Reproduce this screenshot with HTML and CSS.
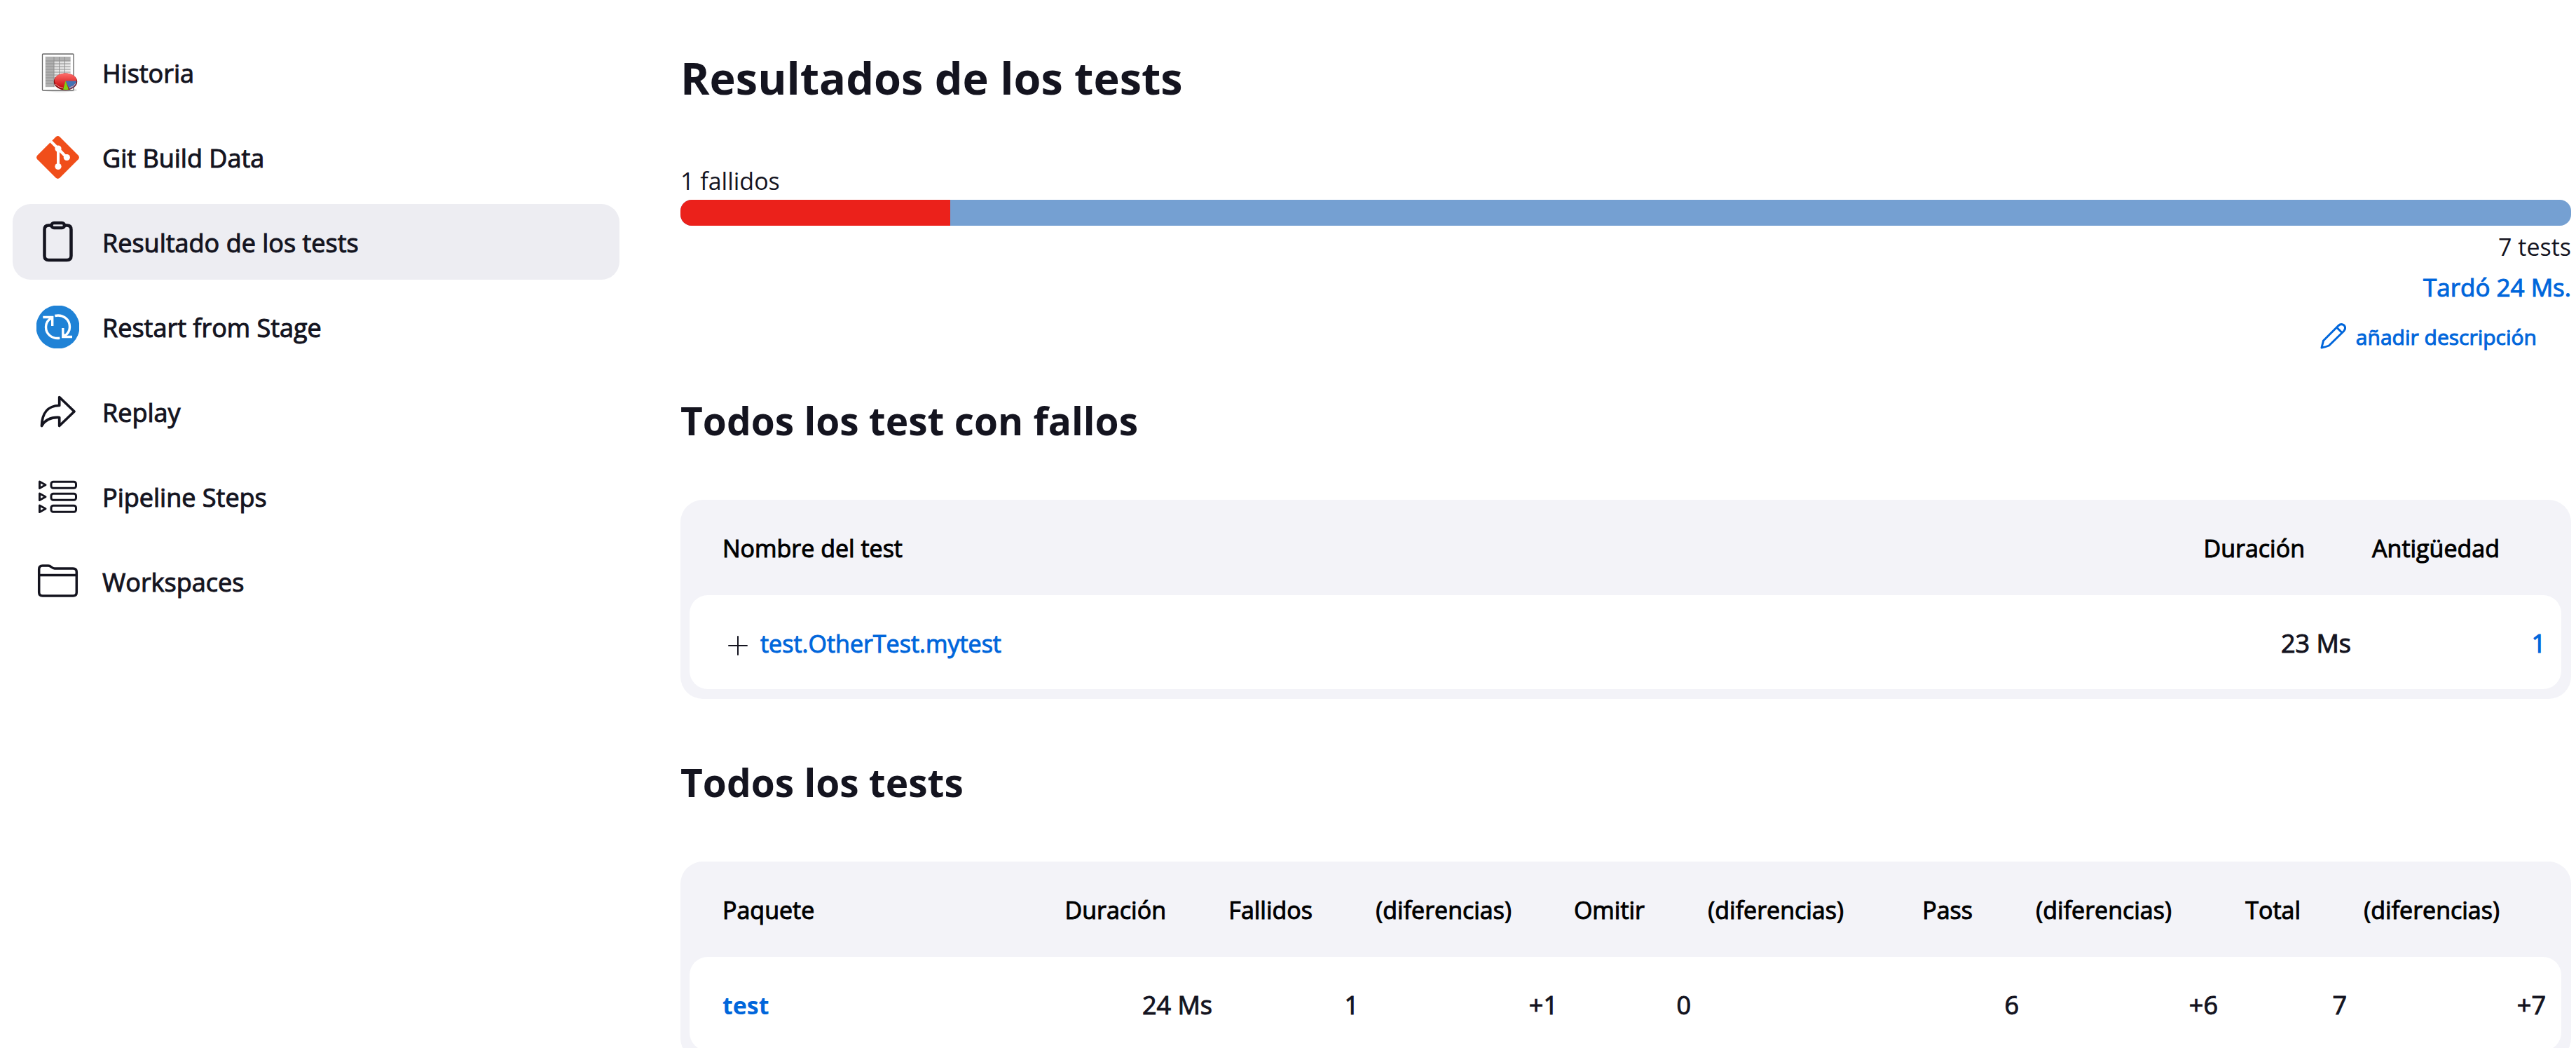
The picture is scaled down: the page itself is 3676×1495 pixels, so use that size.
FILE: index.html
```html
<!DOCTYPE html>
<html lang="es">
<head>
<meta charset="utf-8">
<meta name="viewport" content="width=device-width, initial-scale=1">
<title>Resultados de los tests</title>
<link rel="stylesheet" href="styles.css">
</head>
<body>
<div class="page">
  <nav class="sidebar" aria-label="Tareas">
    <a class="task" href="#historia">
      <svg class="task-icon" viewBox="0 0 61 61" aria-hidden="true">
        <defs>
          <linearGradient id="pie-red" x1="0" y1="0" x2="0" y2="1"><stop offset="0" stop-color="#ff6f6c"/><stop offset="1" stop-color="#c8090c"/></linearGradient>
          <linearGradient id="sheet" x1="0" y1="0" x2="1" y2="1"><stop offset="0" stop-color="#d4d4d4"/><stop offset="1" stop-color="#f6f6f6"/></linearGradient>
        </defs>
        <ellipse cx="34" cy="55.500" rx="24" ry="3" fill="#e2e2e2"/>
        <rect x="8.500" y="4" width="44.500" height="52" rx="1" fill="#fff" stroke="#666" stroke-width="1.300"/>
        <path d="M12.500 7.500H49V51.500H12.500Z" fill="url(#sheet)"/>
        <path d="M13 8H48.500V14H25V51H13Z" fill="#b0b0b0"/>
        <path d="M13 14H48.500M13 18H48.500M13 22H48.500M13 26H48.500M13 30H48.500M13 34H48.500M13 38H48.500M13 42H48.500M13 46H48.500M25 8V51M32.500 8V51M40.500 8V51" stroke="#8f8f8f" stroke-width="1" fill="none"/>
        <ellipse cx="41.500" cy="43.500" rx="16.700" ry="12" fill="#8c0b0d"/>
        <ellipse cx="41.500" cy="42" rx="15.700" ry="10.500" fill="url(#pie-red)"/>
        <path d="M41.500 42.500H57.200C57.200 48 53 52.500 47 54Z" fill="#4472b4"/>
        <path d="M41.500 42.500L46 54.500Q42 55.500 38 54.500Z" fill="#7fd012"/>
        <path d="M27 47Q32 52 38 52.500M47 52Q53 51 56 46" stroke="#f0a0a0" stroke-width="1" fill="none"/>
      </svg>
      <span class="task-label">Historia</span>
    </a>
    <a class="task" href="#git">
      <svg class="task-icon" viewBox="0 0 61 61" aria-hidden="true">
        <path d="M27.700 1.200Q30.500-1 33.300 1.200L59.800 27.700Q62 30.500 59.800 33.300L33.300 59.800Q30.500 62 27.700 59.800L1.200 33.300Q-1 30.500 1.200 27.700Z" fill="#f04e1a"/>
        <path d="M20.500 7.500L31 18L43 30.500M31 18V43" stroke="#fff" stroke-width="4" fill="none"/>
        <circle cx="31" cy="18" r="4.600" fill="#fff"/><circle cx="43.300" cy="30.500" r="4.600" fill="#fff"/><circle cx="31" cy="43.500" r="4.600" fill="#fff"/>
      </svg>
      <span class="task-label">Git Build Data</span>
    </a>
    <a class="task task-active" href="#tests" aria-current="page">
      <svg class="task-icon line-icon" viewBox="0 0 61 61" stroke-width="4.500" aria-hidden="true">
        <path d="M21 6.500H17.500Q11.500 6.500 11.500 12.500V50Q11.500 56 17.500 56H43.500Q49.500 56 49.500 50V12.500Q49.500 6.500 43.500 6.500H40"/>
        <rect x="21.500" y="3" width="18.500" height="7" rx="3.500"/>
      </svg>
      <span class="task-label">Resultado de los tests</span>
    </a>
    <a class="task" href="#restart">
      <svg class="task-icon" viewBox="0 0 61 61" aria-hidden="true">
        <circle cx="30.500" cy="30.500" r="31" fill="#1f82d6"/>
        <g fill="none" stroke="#fff" stroke-width="3.400">
          <path d="M26.300 14.500C38 12 47.500 19.500 47.500 30.500C47.500 36 45 40.500 39 44"/>
          <path d="M33.300 46.300C22 48 13.500 40.500 13.500 30.500C13.500 25 16 20.500 22 17"/>
          <path d="M9.300 16.500H22.700V29M37.800 32V44.500H51"/>
        </g>
        <path d="M16.500 16.500H22.700V22.500ZM44.500 44.500H37.800V38.500Z" fill="#fff"/>
      </svg>
      <span class="task-label">Restart from Stage</span>
    </a>
    <a class="task" href="#replay">
      <svg class="task-icon line-icon" viewBox="0 0 61 61" stroke-width="3.700" aria-hidden="true">
        <path d="M32.700 9.500L54 30L32.700 50.500V38.500C22 38 13 41 7.500 50.500C8 33 16 21.500 32.700 21.500Z"/>
      </svg>
      <span class="task-label">Replay</span>
    </a>
    <a class="task" href="#steps">
      <svg class="task-icon line-icon" viewBox="0 0 61 61" stroke-width="3" aria-hidden="true">
        <path d="M4.500 9L13 13.800L4.500 18.500ZM4.500 26L13 30.800L4.500 35.500ZM4.500 43L13 47.800L4.500 52.500Z"/>
        <rect x="21" y="9.300" width="35.500" height="9" rx="3"/><rect x="21" y="26.300" width="35.500" height="9" rx="3"/><rect x="21" y="43.300" width="35.500" height="9" rx="3"/>
      </svg>
      <span class="task-label">Pipeline Steps</span>
    </a>
    <a class="task" href="#workspaces">
      <svg class="task-icon line-icon" viewBox="0 0 61 61" stroke-width="3.500" aria-hidden="true">
        <path d="M3.700 46V13Q3.700 8 8.700 8H17C21 8 22 12 26 12H52.300Q57.300 12 57.300 17V46Q57.300 51 52.300 51H8.700Q3.700 51 3.700 46ZM3.700 21.500H57.300"/>
      </svg>
      <span class="task-label">Workspaces</span>
    </a>
  </nav>

  <main class="content">
    <h1 class="title">Resultados de los tests</h1>

    <section class="summary">
      <p class="summary-text">1 fallidos</p>
      <div class="bar" role="img" aria-label="1 de 7 tests con fallos"><div class="bar-failed" style="width:14.286%"></div></div>
      <p class="summary-text summary-end">7 tests</p>
      <p class="summary-text summary-end"><a class="link duration-link" href="#history">Tardó 24 Ms.</a></p>
      <a class="describe link" href="#describe">
        <svg class="describe-icon" viewBox="0 0 37 37" aria-hidden="true">
          <path d="M2 35L4.500 25L26 3.500Q30 0 34 3Q37.500 7 33.500 11.500L12.500 32Q8 34 2 35ZM23.500 6L31 13.500"/>
        </svg>
        <span class="describe-label">añadir descripción</span>
      </a>
    </section>

    <h2 class="heading">Todos los test con fallos</h2>
    <table class="data">
      <colgroup><col><col class="col-duration"><col class="col-age"></colgroup>
      <thead><tr><th scope="col">Nombre del test</th><th scope="col">Duración</th><th scope="col">Antigüedad</th></tr></thead>
      <tbody>
        <tr>
          <td>
            <div class="test-name">
              <button class="expand" type="button" aria-label="Mostrar detalles"><svg class="expand-icon" viewBox="0 0 28 28" aria-hidden="true"><path d="M14 1V27M1 14H27"/></svg></button>
              <a class="link" href="#mytest">test.OtherTest.mytest</a>
            </div>
          </td>
          <td>23 Ms</td>
          <td><a class="link" href="#age">1</a></td>
        </tr>
      </tbody>
    </table>

    <h2 class="heading">Todos los tests</h2>
    <table class="data">
      <colgroup><col><col class="col-duration"><col class="col-failed"><col class="col-diff"><col class="col-skipped"><col class="col-diff"><col class="col-count"><col class="col-diff"><col class="col-count"><col class="col-diff"></colgroup>
      <thead><tr><th scope="col">Paquete</th><th scope="col">Duración</th><th scope="col">Fallidos</th><th scope="col">(diferencias)</th><th scope="col">Omitir</th><th scope="col">(diferencias)</th><th scope="col">Pass</th><th scope="col">(diferencias)</th><th scope="col">Total</th><th scope="col">(diferencias)</th></tr></thead>
      <tbody>
        <tr><td><a class="link link-strong" href="#package">test</a></td><td>24 Ms</td><td>1</td><td>+1</td><td>0</td><td></td><td>6</td><td>+6</td><td>7</td><td>+7</td></tr>
      </tbody>
    </table>
  </main>
</div>
</body>
</html>
```
FILE: styles.css
```css
:root {
  --text: #14141f;
  --link: #0066db;
  --panel: #f3f3f8;
}

* {
  box-sizing: border-box;
}

body {
  margin: 0;
  background: #fff;
  color: var(--text);
  font-family: "Open Sans", "Noto Sans", sans-serif;
  font-size: 36px;
  line-height: 56px;
}

.page {
  display: grid;
  grid-template-columns: 866px minmax(0, 1fr);
  column-gap: 87px;
  padding: 49px 7px 0 18px;
}

.sidebar {
  display: flex;
  flex-direction: column;
  gap: 13px;
}

.content {
  display: flex;
  flex-direction: column;
}

/* The installed face has no medium cut, so a thin outline gives the weight. */
.task-label,
.link,
.data th,
.data td {
  -webkit-text-stroke: 1px currentColor;
}

.task {
  display: flex;
  align-items: center;
  gap: 33px;
  height: 108px;
  padding: 0 34px;
  border-radius: 26px;
  color: var(--text);
  text-decoration: none;
}

.task-active {
  background: #ededf2;
}

.task-label {
  padding-top: 4px;
}

.task-icon {
  flex: none;
  width: 61px;
  height: 61px;
}

.line-icon {
  fill: none;
  stroke: var(--text);
  stroke-linejoin: round;
  stroke-linecap: round;
}

.link {
  color: var(--link);
  text-decoration: none;
}

.data .link-strong {
  font-weight: 700;
  -webkit-text-stroke: 0;
}

.title {
  margin: 14px 0 69px;
  font-size: 63px;
  line-height: 96px;
  font-weight: 700;
}

.summary {
  display: flex;
  flex-direction: column;
}

.summary-text {
  margin: 0;
  padding-top: 4px;
  font-size: 34px;
  line-height: 53px;
}

.summary-end {
  text-align: right;
}

.duration-link {
  font-size: 35px;
}

.bar {
  height: 37px;
  border-radius: 16px;
  background: #75a0d2;
  overflow: hidden;
}

.bar-failed {
  height: 100%;
  background: #eb211b;
}

.describe {
  display: flex;
  align-items: center;
  align-self: flex-end;
  gap: 14px;
  height: 84px;
  padding-right: 49px;
  font-size: 30px;
}

.describe-label {
  padding-top: 4px;
}

.describe-icon {
  width: 37px;
  height: 37px;
  fill: none;
  stroke: currentColor;
  stroke-width: 3;
  stroke-linejoin: round;
}

.heading {
  margin: 39px 0 73px;
  font-size: 55px;
  line-height: 80px;
  font-weight: 700;
}

.data {
  width: 100%;
  margin-bottom: 40px;
  padding: 0 14px 14px 13px;
  border-radius: 32px;
  border-spacing: 0;
  background: var(--panel);
  table-layout: fixed;
}

.data th {
  height: 136px;
  padding: 2px 88px 0 0;
  color: #000;
  font-size: 34px;
  font-weight: 400;
  text-align: right;
  white-space: nowrap;
}

.data td {
  height: 134px;
  padding: 4px 22px 0 0;
  background: #fff;
  text-align: right;
  white-space: nowrap;
}

.data th:first-child,
.data td:first-child {
  padding-left: 47px;
  font-size: 34px;
  text-align: left;
}

.data td:first-child {
  border-radius: 26px 0 0 26px;
}

.data td:last-child {
  border-radius: 0 26px 26px 0;
}

.col-duration {
  width: 234px;
}

.col-age {
  width: 278px;
}

.col-failed {
  width: 209px;
}

.col-skipped {
  width: 190px;
}

.col-diff {
  width: 284px;
}

.col-count {
  width: 184px;
}

.test-name {
  display: flex;
  align-items: center;
  gap: 10px;
}

.expand {
  display: flex;
  padding: 12px 8px 6px;
  border: 0;
  background: none;
  color: var(--text);
}

.expand-icon {
  width: 28px;
  height: 28px;
  fill: none;
  stroke: currentColor;
  stroke-width: 2;
  stroke-linecap: round;
}
```
